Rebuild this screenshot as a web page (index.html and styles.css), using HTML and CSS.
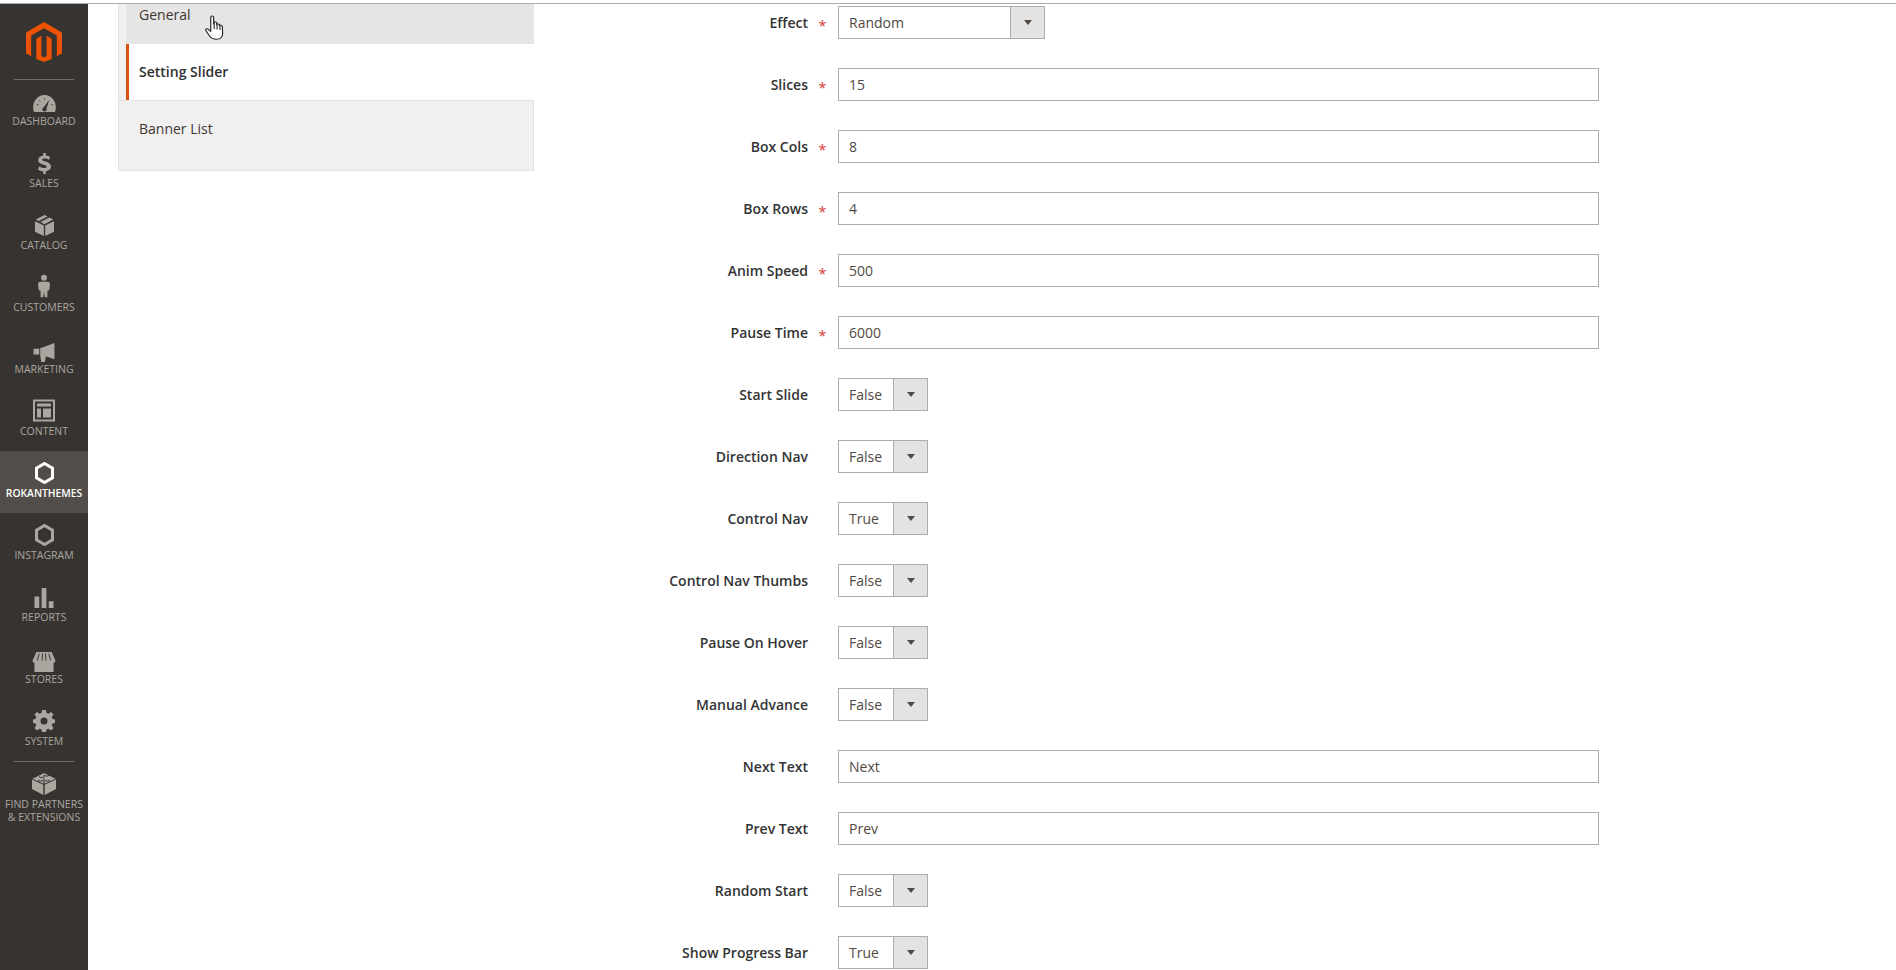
FILE: index.html
```html
<!DOCTYPE html>
<html lang="en">
<head>
<meta charset="utf-8">
<title>Setting Slider</title>
<link rel="stylesheet" href="styles.css">
</head>
<body>
<div class="topline"></div>
<div class="page">
  <nav class="sidebar">
    <div class="logo">
      <svg width="36" height="40" viewBox="0 0 36 40"><path fill="#eb5202" d="M18 0 0 10.400v20.800l5.200 3V13.600L18 6.200l12.800 7.400v20.600l5.200-3V10.400z"/><path fill="#eb5202" d="M20.600 33.900 18 35.400l-2.600-1.500V13.700l-5.100 3v20.300L18 40l7.700-3V16.700l-5.100-3z"/></svg>
    </div>
    <a class="nav-item"><svg class="ico" width="23" height="17" viewBox="0 0 24 18"><path fill-rule="evenodd" d="M12 0C5 0 0 6 0 13c0 2 .5 4 1 5h22c.6-1 1-3 1-5C24 6 19 0 12 0zM17 5l-5.800 8a2.300 2.300 0 1 0 3 1.300z"/><path class="cutline" d="M4 10l1.500.5M6.500 5.500l1 1.200M12 3.500v1.500M19.500 10.500l1.500-.5"/></svg><span>DASHBOARD</span></a>
    <a class="nav-item"><svg class="ico" width="13" height="21" viewBox="0 0 15 26" preserveAspectRatio="none"><path d="M6 0h3v3c2 .3 4 1 5 1.700l-1.200 3.800C11 7.400 9 6.900 7.500 6.900c-1.500 0-2.500.5-2.500 1.400 0 1 1 1.400 3.500 2.200 4 1.300 6.500 3 6.500 6.300 0 3-2 5.200-6 5.800V26H6v-3.300c-2.400-.2-4.500-1-6-2l1.200-3.900c1.700 1 4 1.900 6 1.900 1.700 0 2.800-.6 2.800-1.700 0-1-1-1.600-3.300-2.300C2.600 13.700.2 12 .2 8.800.2 6 2 3.900 6 3.200z"/></svg><span>SALES</span></a>
    <a class="nav-item"><svg class="ico" width="19" height="21" viewBox="0 0 20 22"><path d="M0 6.500 9.300 11v11L0 17.500zM20 6.500 10.700 11v11l9.300-4.500zM10 0l3.300 1.600L4 6.300.8 4.800zM15 2.500l4.200 2.300L10 9.600 5.800 7.300z"/></svg><span>CATALOG</span></a>
    <a class="nav-item"><svg class="ico" width="12" height="24" viewBox="0 0 14 26"><circle cx="7" cy="3.500" r="3.500"/><path d="M3 8h8c2 0 3 1 3 3l-1 7-2 .5V26H8l-1-6-1 6H3v-7.500L1 18l-1-7c0-2 1-3 3-3z"/></svg><span>CUSTOMERS</span></a>
    <a class="nav-item low"><svg class="ico" width="22" height="19" viewBox="0 0 22 20"><path d="M0 6h6v6H0zM7 5.500 22 0v17l-9-3-1 6H8l-1-7z"/></svg><span>MARKETING</span></a>
    <a class="nav-item"><svg class="ico" width="22" height="23" viewBox="0 0 22 22"><path fill-rule="evenodd" d="M0 0h22v22H0zM2 2v18h18V2zM4 4h14v3H4zM4 9h4v9H4zM10 9h8v9h-8z"/></svg><span>CONTENT</span></a>
    <a class="nav-item active"><svg class="ico" width="19" height="22" viewBox="0 0 19 22"><path class="hex" d="M9.500 1.500 17.500 6.200v9.600L9.500 20.500 1.500 15.800V6.200z"/></svg><span>ROKANTHEMES</span></a>
    <a class="nav-item"><svg class="ico" width="19" height="22" viewBox="0 0 19 22"><path class="hex" d="M9.500 1.500 17.500 6.200v9.600L9.500 20.500 1.500 15.800V6.200z"/></svg><span>INSTAGRAM</span></a>
    <a class="nav-item"><svg class="ico" width="20" height="20" viewBox="0 0 20 21"><path d="M0 9h5v12H0zM7.500 0h5v21h-5zM15 14h5v7h-5z"/></svg><span>REPORTS</span></a>
    <a class="nav-item low"><svg class="ico" width="24" height="20" viewBox="0 0 24 21"><path d="M4 0h16l4 9c0 1.500-1 2.500-2 2.500v9.500H2v-9.500C1 11.500 0 10.500 0 9z"/><path class="cutline" d="M7 1.500 5 9M10.500 1.500 10 9M13.500 1.500 14 9M17 1.500 19 9"/></svg><span>STORES</span></a>
    <a class="nav-item"><svg class="ico" width="22" height="22" viewBox="0 0 22 22"><path fill-rule="evenodd" d="M9 0h4l.5 3 2 .8L18 2l2.500 2.500-1.800 2.500.8 2 3 .5v3.500l-3 .5-.8 2 1.800 2.500L18 20.500 15.500 18.700l-2 .8-.5 2.500H9l-.5-2.500-2-.8L4 20.500 1.500 18l1.800-2.500-.8-2L0 13V9.500l2.500-.5.800-2L1.500 4.500 4 2l2.500 1.800 2-.8zM11 7.500a3.500 3.500 0 1 0 0 7 3.500 3.500 0 0 0 0-7z"/></svg><span>SYSTEM</span></a>
    <a class="nav-item last"><svg class="ico" width="24" height="22" viewBox="0 0 24 22"><path d="M12 0l12 6v10l-11.300 6V11zM12 0 0 6v10l11.300 6V11z"/><path class="cutline" d="M0 6l12 5.500L24 6M7 3.500c1 1.500 4 1.500 5 0M12 2c1 1.500 4 1.500 5 0M6 7c1 1.500 4 1.500 5 0M13 7c1 1.500 4 1.500 5 0"/></svg><span>FIND PARTNERS<br>&amp; EXTENSIONS</span></a>
  </nav>

  <aside class="tabs">
    <a class="tab tab-general">General</a>
    <a class="tab tab-current">Setting Slider</a>
    <a class="tab tab-banner">Banner List</a>
  </aside>

  <form class="form">
    <div class="row"><label class="lbl">Effect</label><span class="req">*</span><div class="sel sel-wide"><span class="val">Random</span><span class="arrow"></span></div></div>
    <div class="row"><label class="lbl">Slices</label><span class="req">*</span><input class="txt" value="15"></div>
    <div class="row"><label class="lbl">Box Cols</label><span class="req">*</span><input class="txt" value="8"></div>
    <div class="row"><label class="lbl">Box Rows</label><span class="req">*</span><input class="txt" value="4"></div>
    <div class="row"><label class="lbl">Anim Speed</label><span class="req">*</span><input class="txt" value="500"></div>
    <div class="row"><label class="lbl">Pause Time</label><span class="req">*</span><input class="txt" value="6000"></div>
    <div class="row"><label class="lbl">Start Slide</label><span class="req"></span><div class="sel"><span class="val">False</span><span class="arrow"></span></div></div>
    <div class="row"><label class="lbl">Direction Nav</label><span class="req"></span><div class="sel"><span class="val">False</span><span class="arrow"></span></div></div>
    <div class="row"><label class="lbl">Control Nav</label><span class="req"></span><div class="sel"><span class="val">True</span><span class="arrow"></span></div></div>
    <div class="row"><label class="lbl">Control Nav Thumbs</label><span class="req"></span><div class="sel"><span class="val">False</span><span class="arrow"></span></div></div>
    <div class="row"><label class="lbl">Pause On Hover</label><span class="req"></span><div class="sel"><span class="val">False</span><span class="arrow"></span></div></div>
    <div class="row"><label class="lbl">Manual Advance</label><span class="req"></span><div class="sel"><span class="val">False</span><span class="arrow"></span></div></div>
    <div class="row"><label class="lbl">Next Text</label><span class="req"></span><input class="txt" value="Next"></div>
    <div class="row"><label class="lbl">Prev Text</label><span class="req"></span><input class="txt" value="Prev"></div>
    <div class="row"><label class="lbl">Random Start</label><span class="req"></span><div class="sel"><span class="val">False</span><span class="arrow"></span></div></div>
    <div class="row"><label class="lbl">Show Progress Bar</label><span class="req"></span><div class="sel"><span class="val">True</span><span class="arrow"></span></div></div>
  </form>
</div>
<svg class="cursor" width="19" height="25" viewBox="0 0 16.500 25" preserveAspectRatio="none"><path fill="#fff" stroke="#222" stroke-width="1" stroke-linejoin="round" d="M5 2.200c0-1.500 2.500-1.500 2.500 0V9l.5-1.500c.5-1 2.200-.8 2.200.4V10c0-1.200 2.200-1.400 2.400 0v1c.2-1.200 2.300-1.200 2.400.2l.3 7c0 3.500-2 6-5.500 6-3 0-4.500-1-6-3.500L.8 15.500c-.7-1.300.9-2.300 1.900-1.300L5 16.500z"/><path fill="none" stroke="#222" stroke-width=".9" d="M8 8v6M10.500 10v4.500M13 11v4"/></svg>
</body>
</html>
```
FILE: styles.css
```css
* { box-sizing: border-box; }
html, body { margin: 0; padding: 0; height: 970px; overflow: hidden; background: #fff; }
body { font-family: "Open Sans", sans-serif; font-size: 14px; color: #303030; position: relative; }
.topline { height: 4px; background: #fff; border-bottom: 1px solid #adadad; }
.page { display: flex; align-items: flex-start; height: 966px; }

.sidebar { width: 88px; flex: none; height: 966px; background: #373330; display: flex; flex-direction: column; align-items: stretch; }
.logo { height: 75px; display: flex; justify-content: center; padding-top: 18px; position: relative; }
.logo::after, .nav-item.last::before { content: ""; position: absolute; left: 14px; width: 60px; height: 1px; background: #736e6a; }
.logo::after { bottom: -1px; }
.nav-item.last::before { top: 0; }
.nav-item { height: 62px; position: relative; display: flex; flex-direction: column; align-items: center; justify-content: flex-end; padding-bottom: 13px; color: #aaa6a0; font-size: 10.5px; line-height: 13px; text-align: center; white-space: nowrap; }
.nav-item .ico { fill: #aaa6a0; margin-bottom: 3px; }
.nav-item.low .ico { margin-bottom: 1px; }
.nav-item.active { background: #524d49; color: #fff; font-weight: 600; font-size: 10.3px; }
.nav-item.active .ico { fill: none; }
.nav-item .hex { fill: none; stroke: #aaa6a0; stroke-width: 3; }
.nav-item.active .hex { stroke: #fff; }
.nav-item .cutline { fill: none; stroke: #373330; stroke-width: 1; }
.nav-item.last { height: auto; justify-content: flex-start; padding-top: 12px; padding-bottom: 0; }

.tabs { width: 416px; margin-left: 30px; flex: none; background: #f0f0f0; border: 1px solid #e3e3e3; border-top: 0; padding-left: 7px; display: flex; flex-direction: column; }
.tab { display: block; font-size: 14px; color: #41362f; padding-left: 13px; }
.tab-general { height: 40px; background: #e5e5e5; line-height: 18px; margin-right: -1px; padding-top: 2px; }
.tab-current { height: 56px; background: #fff; border-left: 3px solid #d85212; padding-left: 10px; font-weight: 600; color: #303030; line-height: 55px; margin-right: -1px; }
.tab-banner { height: 70px; margin-left: -7px; padding-left: 20px; padding-top: 19px; line-height: 18px; border-top: 1px solid #e3e3e3; }

.form { margin-left: 74px; flex: none; padding-top: 2px; display: flex; flex-direction: column; gap: 29px; }
.row { display: flex; align-items: center; height: 33px; }
.lbl { width: 200px; text-align: right; font-weight: 600; font-size: 14px; color: #333; }
.req { width: 30px; height: 33px; text-align: center; padding-right: 1px; padding-top: 3px; color: #d83a3a; font-size: 15px; line-height: 33px; }
.txt { width: 761px; height: 33px; border: 1px solid #adadad; padding: 0 10px; font: 14px "Open Sans", sans-serif; color: #514943; background: #fff; }
.sel { display: flex; height: 33px; width: 90px; border: 1px solid #adadad; background: #fff; color: #514943; }
.sel-wide { width: 207px; }
.val { flex: 1; padding-left: 10px; line-height: 31px; }
.arrow { width: 34px; border-left: 1px solid #adadad; background: #e3e3e3; display: flex; align-items: center; justify-content: center; }
.arrow::before { content: ""; border: 4px solid transparent; border-top: 5.500px solid #514943; border-bottom: 0; }

.cursor { position: absolute; left: 205px; top: 15px; }
```
